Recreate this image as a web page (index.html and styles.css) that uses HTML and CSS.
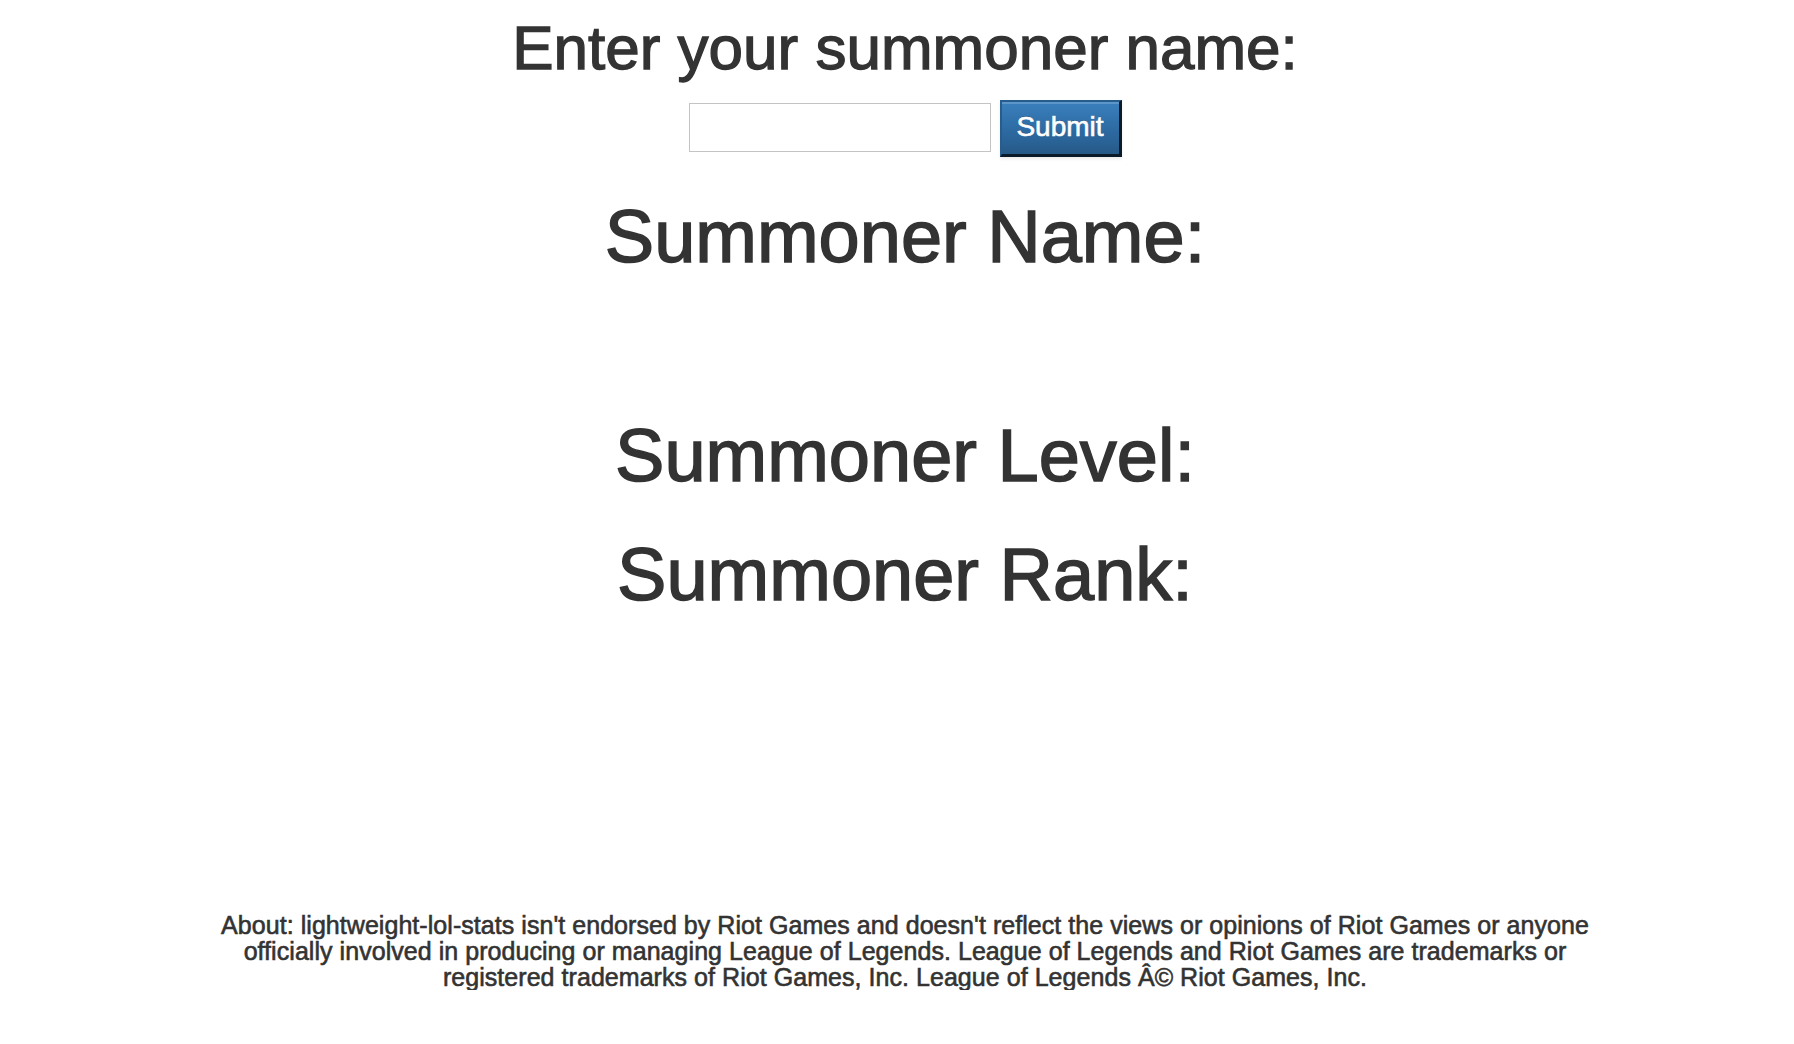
FILE: index.html
```html
<!DOCTYPE html>
<html lang="en">
<head>
<meta charset="utf-8">
<title>lightweight-lol-stats</title>
<link rel="stylesheet" href="styles.css">
</head>
<body>
<main class="page">
  <h2 class="prompt">Enter your summoner name:</h2>
  <form class="search" onsubmit="return false;">
    <input class="search-input" type="text" aria-label="Summoner name">
    <button class="search-button" type="submit">Submit</button>
  </form>
  <section class="stats">
    <h1 class="stat">Summoner Name:</h1>
    <div class="stat-value"></div>
    <h1 class="stat">Summoner Level:</h1>
    <h1 class="stat">Summoner Rank:</h1>
  </section>
  <footer class="about">About: lightweight-lol-stats isn't endorsed by Riot Games and doesn't reflect the views or opinions of Riot Games or anyone officially involved in producing or managing League of Legends. League of Legends and Riot Games are trademarks or registered trademarks of Riot Games, Inc. League of Legends Â© Riot Games, Inc.</footer>
</main>
</body>
</html>
```
FILE: styles.css
```css
html, body {
  margin: 0;
  padding: 0;
  background: #ffffff;
}

body {
  font-family: "Liberation Sans", Arial, Helvetica, sans-serif;
  color: #333333;
}

.page {
  padding: 14px 0 0 16px;
  text-align: center;
}

.prompt {
  margin: 0 0 19px;
  font-size: 62px;
  line-height: 67px;
  font-weight: normal;
  -webkit-text-stroke: 1.3px #333333;
}

.search {
  display: flex;
  justify-content: center;
  align-items: flex-start;
  gap: 9px;
  margin: 0;
}

.search-input {
  box-sizing: border-box;
  width: 302px;
  height: 49px;
  margin: 3px 0 0;
  padding: 0 10px;
  border: 1px solid #c4c4c4;
  border-radius: 0;
  background: #ffffff;
  font-family: "Liberation Sans", Arial, sans-serif;
  font-size: 24px;
  outline: none;
}

.search-button {
  box-sizing: border-box;
  display: flex;
  align-items: center;
  justify-content: center;
  width: 122px;
  height: 57px;
  margin: 0;
  padding: 0 0 2px;
  border-style: solid;
  border-width: 2px 3px 3px 2px;
  border-color: #275d8c #0c1b2a #0c1b2a #275d8c;
  border-radius: 0;
  background: linear-gradient(to bottom, #3a80bd 0%, #2d6aa2 55%, #265a88 100%);
  box-shadow: inset 0 2px 0 rgba(255, 255, 255, 0.18), 0 2px 3px rgba(0, 0, 0, 0.08);
  color: #ffffff;
  font-family: "Liberation Sans", Arial, sans-serif;
  font-size: 28px;
  line-height: 1;
  -webkit-text-stroke: 0.6px #ffffff;
  text-shadow: 0 -1px 0 rgba(0, 0, 0, 0.2);
  cursor: pointer;
}

.stats {
  margin: 0;
  padding-top: 1px;
}

.stat {
  margin: 39px 0 0;
  font-size: 74px;
  line-height: 80px;
  font-weight: normal;
  -webkit-text-stroke: 1.5px #333333;
}

.stat-value {
  height: 100px;
}

.about {
  width: 1400px;
  margin: 297px auto 0;
  font-size: 25px;
  line-height: 26px;
  letter-spacing: 0.05px;
  -webkit-text-stroke: 0.6px #333333;
}
```
